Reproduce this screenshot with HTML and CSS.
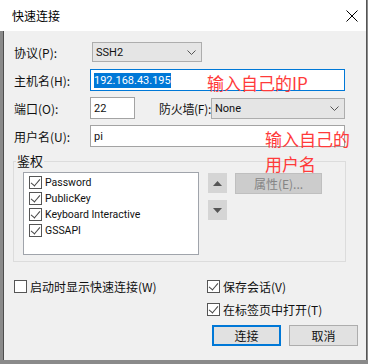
FILE: index.html
```
<!DOCTYPE html>
<html lang="zh-CN">
<head>
    <meta charset="UTF-8">
    <meta name="viewport" content="width=device-width, initial-scale=1.0">
    <title>快速连接</title>
    <link rel="stylesheet" href="styles.css">
</head>
<body>
    <div class="window">
        <div class="titlebar">
            <span class="title">快速连接</span>
            <svg class="close" width="12" height="12" viewBox="0 0 12 12"><path d="M0.5 0.5 L11.5 11.5 M11.5 0.5 L0.5 11.5" stroke="#000" stroke-width="1" fill="none"/></svg>
        </div>
        <div class="content">
            <div class="row">
                <span class="label">协议(P):</span>
                <div class="select proto"><span class="latin">SSH2</span><svg class="chev" width="9" height="5" viewBox="0 0 9 5"><path d="M0.5 0.5 L4.5 4.5 L8.5 0.5" stroke="#555" fill="none"/></svg></div>
            </div>
            <div class="row">
                <span class="label">主机名(H):</span>
                <div class="input wide focused"><span class="latin selected">192.168.43.195</span></div>
            </div>
            <div class="row">
                <span class="label">端口(O):</span>
                <div class="input port"><span class="latin">22</span></div>
                <span class="label fw-label">防火墙(F):</span>
                <div class="select fw"><span class="latin">None</span><svg class="chev" width="9" height="5" viewBox="0 0 9 5"><path d="M0.5 0.5 L4.5 4.5 L8.5 0.5" stroke="#555" fill="none"/></svg></div>
            </div>
            <div class="row">
                <span class="label">用户名(U):</span>
                <div class="input wide"><span class="latin">pi</span></div>
            </div>

            <fieldset class="auth">
                <legend>鉴权</legend>
                <div class="auth-body">
                    <div class="list latin">
                        <div class="item"><span class="check on"></span>Password</div>
                        <div class="item"><span class="check on"></span>PublicKey</div>
                        <div class="item"><span class="check on"></span>Keyboard Interactive</div>
                        <div class="item"><span class="check on"></span>GSSAPI</div>
                    </div>
                    <div class="arrows">
                        <div class="arrow-btn"><svg width="9" height="5" viewBox="0 0 9 5"><path d="M0 5 L4.5 0 L9 5 Z" fill="#555"/></svg></div>
                        <div class="arrow-btn"><svg width="9" height="5" viewBox="0 0 9 5"><path d="M0 0 L4.5 5 L9 0 Z" fill="#555"/></svg></div>
                    </div>
                    <div class="prop-btn">属性(E)...</div>
                </div>
            </fieldset>

            <div class="options">
                <div class="opt"><span class="check"></span>启动时显示快速连接(W)</div>
                <div class="opt"><span class="check on"></span>保存会话(V)</div>
                <div></div>
                <div class="opt"><span class="check on"></span>在标签页中打开(T)</div>
            </div>

            <div class="actions">
                <div class="btn primary">连接</div>
                <div class="btn">取消</div>
            </div>
        </div>

        <div class="note note-ip">输入自己的IP</div>
        <div class="note note-user">
            <div class="note-line">输入自己的</div>
            <div class="note-line">用户名</div>
        </div>
    </div>
</body>
</html>
```

FILE: styles.css
```
body {
    margin: 0;
    background-color: #8a8a8a;
    font-family: "Noto Sans CJK SC", "Microsoft YaHei", sans-serif;
    font-size: 12px;
    color: #111;
}

.latin {
    font-family: Roboto, "Noto Sans CJK SC", sans-serif;
    font-size: 11px;
}

.window {
    position: relative;
    width: 366px;
    height: 360px;
    border-right: 1px solid #555;
    background-color: #f0f0f0;
    display: flex;
    flex-direction: column;
}

.titlebar {
    height: 31px;
    background-color: #fff;
    display: flex;
    align-items: center;
    justify-content: space-between;
    padding: 0 8px 0 12px;
}

.title {
    font-size: 12px;
    color: #000;
}

.content {
    flex: 1;
    border-left: 3px solid #8a8a8a;
    box-shadow: inset 1px 0 #4d4d4d;
    padding: 10px 0 0 11px;
}

.row {
    display: flex;
    align-items: center;
    height: 22px;
    margin-bottom: 6px;
}

.label {
    width: 76px;
    flex: none;
    white-space: nowrap;
}

.select {
    box-sizing: border-box;
    height: 21px;
    border: 1px solid #adadad;
    background-color: #e5e5e5;
    display: flex;
    align-items: center;
    justify-content: space-between;
    padding: 0 5px 0 3px;
}

.proto {
    width: 110px;
    height: 20px;
    margin-left: 2px;
}

.fw {
    width: 134px;
}

.input {
    box-sizing: border-box;
    height: 22px;
    border: 1px solid #a3a3a3;
    background-color: #fff;
    display: flex;
    align-items: center;
    padding-left: 3px;
}

.wide {
    width: 255px;
}

.port {
    width: 45px;
}

.fw-label {
    width: 52px;
    margin-left: 24px;
    letter-spacing: -0.3px;
}

.focused {
    border-color: #0078d7;
}

.selected {
    background-color: #0078d7;
    color: #fff;
    line-height: 15px;
}

.auth {
    margin: 3px 0 0 -1px;
    width: 333px;
    box-sizing: border-box;
    border: 1px solid #dcdcdc;
    padding: 3px 9px 6px 9px;
}

.auth legend {
    font-size: 13px;
    line-height: 16px;
    padding: 0 1px;
    margin-left: -7px;
}

.auth-body {
    display: flex;
    align-items: flex-start;
}

.list {
    box-sizing: border-box;
    width: 176px;
    height: 83px;
    border: 1px solid #a0a4ab;
    background-color: #fff;
    padding-top: 1px;
}

.item {
    display: flex;
    align-items: center;
    height: 16px;
    padding-left: 5px;
    font-size: 10.5px;
}

.check {
    box-sizing: border-box;
    width: 13px;
    height: 13px;
    border: 1px solid #555;
    background-color: #fff;
    margin-right: 3px;
    flex: none;
    position: relative;
}

.check.on::after {
    content: "";
    position: absolute;
    left: 3px;
    top: 0px;
    width: 4px;
    height: 8px;
    border-right: 1px solid #444;
    border-bottom: 1px solid #444;
    transform: rotate(40deg);
}

.arrows {
    display: flex;
    flex-direction: column;
    gap: 7px;
    margin: 1px 0 0 9px;
}

.arrow-btn {
    width: 19px;
    height: 20px;
    background-color: #d5d5d5;
    display: flex;
    align-items: center;
    justify-content: center;
}

.prop-btn {
    box-sizing: border-box;
    width: 87px;
    height: 21px;
    margin: 1px 0 0 8px;
    background-color: #cccccc;
    border: 1px solid #bfbfbf;
    color: #858585;
    display: flex;
    align-items: center;
    justify-content: center;
}

.options {
    display: grid;
    grid-template-columns: 193px auto;
    row-gap: 7px;
    margin-top: 16px;
}

.opt {
    display: flex;
    align-items: center;
    height: 16px;
}

.actions {
    display: flex;
    justify-content: flex-end;
    gap: 8px;
    padding-right: 8px;
    margin-top: 8px;
}

.btn {
    box-sizing: border-box;
    width: 69px;
    height: 21px;
    background-color: #e1e1e1;
    border: 1px solid #adadad;
    display: flex;
    align-items: center;
    justify-content: center;
}

.btn.primary {
    border-color: #0078d7;
    box-shadow: inset 0 0 0 1px #0078d7;
}

.note {
    position: absolute;
    color: #ff3a3a;
    font-size: 17px;
}

.note-ip {
    left: 207px;
    top: 72px;
    line-height: 22px;
}

.note-user {
    left: 265px;
    top: 129px;
    line-height: 20px;
}

.note-line + .note-line {
    margin-top: 5px;
}
```
